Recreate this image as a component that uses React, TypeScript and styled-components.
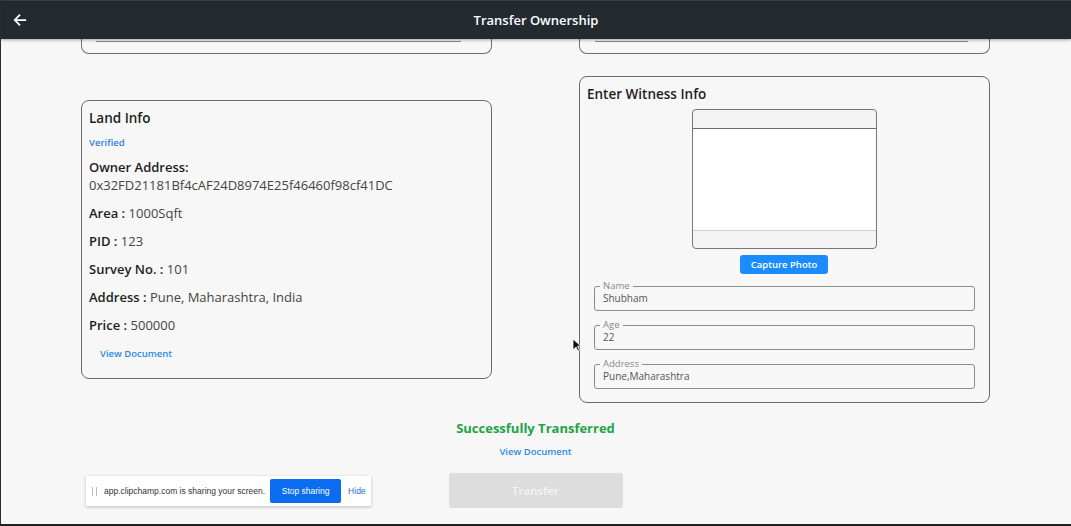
import * as React from "react";
import styled, { createGlobalStyle } from "styled-components";

const GlobalStyle = createGlobalStyle`
  html, body {
    margin: 0;
    padding: 0;
    background: #f7f7f7;
    font-family: "Open Sans", "Noto Sans", sans-serif;
    overflow: hidden;
  }
`;

const Screen = styled.div`
  position: relative;
  width: 1071px;
  height: 526px;
  box-sizing: border-box;
  background: #f7f7f7;
  border-left: 1px solid #2b2b2b;
  border-bottom: 2px solid #222;
  display: flex;
  flex-direction: column;
  overflow: hidden;
`;

const AppBar = styled.header`
  height: 39px;
  flex: none;
  background: #232b31;
  border-top: 1px solid #3b3f42;
  box-sizing: border-box;
  display: flex;
  align-items: center;
  position: relative;
  z-index: 2;
  box-shadow: 0 1px 3px rgba(0, 0, 0, 0.35);
`;

const BackButton = styled.button`
  width: 40px;
  height: 38px;
  border: none;
  background: transparent;
  display: flex;
  align-items: center;
  justify-content: center;
  padding: 0 2px 0 0;
  color: #fff;
`;

const Title = styled.h1`
  flex: 1;
  margin: 0 40px 0 0;
  text-align: center;
  color: #fff;
  font-size: 13px;
  font-weight: 600;
`;

const Content = styled.main`
  flex: 1;
  display: flex;
  flex-direction: column;
  padding: 0 81px 0 80px;
`;

const Row = styled.div<{ $align?: string; $top?: number }>`
  display: grid;
  grid-template-columns: 411px 411px;
  justify-content: space-between;
  align-items: ${(p) => p.$align || "start"};
  margin-top: ${(p) => p.$top || 0}px;
`;

const ClippedCard = styled.div<{ $shift?: number }>`
  height: 15px;
  box-sizing: border-box;
  border: 1px solid #6f6f6f;
  border-top: none;
  border-radius: 0 0 8px 8px;
  padding: 0 ${(p) => p.$shift || 14}px;
`;

const ClippedInner = styled.div<{ $right?: number }>`
  height: 2px;
  margin-right: ${(p) => p.$right || 30}px;
  border-bottom: 1px solid #8a8a8a;
`;

const Card = styled.section<{ $height?: number }>`
  border: 1px solid #6a6a6a;
  border-radius: 8px;
  box-sizing: border-box;
  padding: 8px 8px 0 7px;
  display: flex;
  flex-direction: column;
  height: ${(p) => (p.$height ? `${p.$height}px` : "auto")};
`;

const CardTitle = styled.h2`
  margin: 0;
  font-size: 13.5px;
  font-weight: 600;
  color: #1e1e1e;
  line-height: 18px;
`;

const Verified = styled.div`
  margin-top: 9px;
  font-size: 9.5px;
  font-weight: 600;
  color: #2b7fe8;
  line-height: 13px;
`;

const Field = styled.div<{ $top?: number }>`
  margin-top: ${(p) => p.$top ?? 10}px;
  font-size: 13px;
  line-height: 18px;
  color: #444;
`;

const Label = styled.span`
  font-weight: 600;
  color: #1e1e1e;
`;

const LinkButton = styled.button<{ $inset?: number; $top?: number }>`
  border: none;
  background: transparent;
  padding: 0;
  font-family: inherit;
  font-size: 9.5px;
  font-weight: 600;
  color: #2a8ae8;
  align-self: ${(p) => (p.$inset ? "flex-start" : "center")};
  margin-left: ${(p) => p.$inset || 0}px;
  margin-top: ${(p) => p.$top || 0}px;
`;

const Webcam = styled.div`
  align-self: center;
  width: 185px;
  height: 140px;
  margin-top: 6px;
  box-sizing: border-box;
  border: 1px solid #777;
  border-radius: 4px;
  background: #f4f4f4;
  display: flex;
  flex-direction: column;
  overflow: hidden;
`;

const CamTop = styled.div`
  height: 18px;
  border-bottom: 1px solid #6d6d6d;
`;

const CamView = styled.div`
  height: 101px;
  background: #fff;
  border-bottom: 1px solid #cfcfcf;
`;

const PrimaryButton = styled.button`
  align-self: center;
  margin-top: 6px;
  width: 88px;
  height: 19px;
  border: none;
  border-radius: 3px;
  background: #1a8cff;
  color: #fff;
  font-family: inherit;
  font-size: 9.5px;
  font-weight: 600;
  padding: 0;
`;

const Fields = styled.div`
  display: flex;
  flex-direction: column;
  gap: 14px;
  padding: 12px 6px 13px 7px;
`;

const Outlined = styled.div`
  height: 25px;
  box-sizing: border-box;
  border: 1px solid #8c8c8c;
  border-radius: 3px;
  padding: 5px 8px 0;
  position: relative;
`;

const FloatLabel = styled.span`
  position: absolute;
  left: 5px;
  top: -7px;
  padding: 0 3px;
  background: #f7f7f7;
  font-size: 9.5px;
  line-height: 11px;
  color: #8a8a8a;
`;

const Value = styled.div`
  font-size: 10px;
  line-height: 12px;
  color: #555;
`;

const Footer = styled.div`
  display: flex;
  flex-direction: column;
  align-items: center;
  margin-top: 16px;
`;

const Success = styled.div`
  font-size: 13px;
  font-weight: 700;
  color: #22a447;
  line-height: 18px;
`;

const DisabledButton = styled.button`
  margin-top: 15px;
  width: 174px;
  height: 35px;
  border: none;
  border-radius: 3px;
  background: #dddddd;
  color: #f4f4f4;
  font-family: inherit;
  font-size: 11.5px;
  font-weight: 600;
`;

const ShareBar = styled.div`
  position: absolute;
  left: 85px;
  top: 476px;
  width: 285px;
  height: 30px;
  background: #fff;
  box-shadow: 0 1px 3px rgba(0, 0, 0, 0.25);
  display: flex;
  align-items: center;
  font-family: "Liberation Sans", Arial, sans-serif;
  font-size: 8.5px;
  color: #333;
  padding-left: 6px;
  box-sizing: border-box;
  z-index: 3;
`;

const Grip = styled.span`
  width: 3px;
  height: 9px;
  border-left: 1px solid #bbb;
  border-right: 1px solid #bbb;
  margin-right: 7px;
`;

const StopButton = styled.button`
  margin-left: 5px;
  width: 71px;
  height: 24px;
  border: none;
  border-radius: 2px;
  background: #0b6cf0;
  color: #fff;
  font-family: inherit;
  font-size: 8.5px;
  padding: 0;
`;

const Hide = styled.span`
  margin-left: 7px;
  color: #2a6ee0;
`;

const Cursor = styled.svg`
  position: absolute;
  left: 571px;
  top: 338px;
  z-index: 4;
`;

const landFields: [string, string][] = [
  ["Area :", "1000Sqft"],
  ["PID :", "123"],
  ["Survey No. :", "101"],
  ["Address :", "Pune, Maharashtra, India"],
  ["Price :", "500000"],
];

const witness = [
  ["Name", "Shubham"],
  ["Age", "22"],
  ["Address", "Pune,Maharashtra"],
];

export default function App() {
  return (
    <Screen>
      <GlobalStyle />
      <AppBar>
        <BackButton aria-label="back">
          <svg width="14" height="14" viewBox="0 0 24 24" fill="none" stroke="#fff" strokeWidth="3" strokeLinecap="square">
            <path d="M21 12H4M11 4l-8 8 8 8" />
          </svg>
        </BackButton>
        <Title>Transfer Ownership</Title>
      </AppBar>
      <Content>
        <Row>
          <ClippedCard>
            <ClippedInner $right={16} />
          </ClippedCard>
          <ClippedCard $shift={15}>
            <ClippedInner $right={6} />
          </ClippedCard>
        </Row>
        <Row $align="center" $top={22}>
          <Card $height={279}>
            <CardTitle>Land Info</CardTitle>
            <Verified>Verified</Verified>
            <Field $top={9}>
              <Label>Owner Address:</Label>
              <br />
              0x32FD21181Bf4cAF24D8974E25f46460f98cf41DC
            </Field>
            {landFields.map(([k, v]) => (
              <Field key={k}>
                <Label>{k}</Label> {v}
              </Field>
            ))}
            <LinkButton $inset={11} $top={13}>View Document</LinkButton>
          </Card>
          <Card>
            <CardTitle>Enter Witness Info</CardTitle>
            <Webcam>
              <CamTop />
              <CamView />
            </Webcam>
            <PrimaryButton>Capture Photo</PrimaryButton>
            <Fields>
              {witness.map(([k, v]) => (
                <Outlined key={k}>
                  <FloatLabel>{k}</FloatLabel>
                  <Value>{v}</Value>
                </Outlined>
              ))}
            </Fields>
          </Card>
        </Row>
        <Footer>
          <Success>Successfully Transferred</Success>
          <LinkButton $top={8}>View Document</LinkButton>
          <DisabledButton disabled>Transfer</DisabledButton>
        </Footer>
      </Content>
      <ShareBar>
        <Grip />
        app.clipchamp.com is sharing your screen.
        <StopButton>Stop sharing</StopButton>
        <Hide>Hide</Hide>
      </ShareBar>
      <Cursor width="10" height="14" viewBox="0 0 10 14">
        <path d="M1 1v11l3-3 2 4 1.6-.8-2-4H9z" fill="#111" stroke="#fff" strokeWidth="0.8" />
      </Cursor>
    </Screen>
  );
}
